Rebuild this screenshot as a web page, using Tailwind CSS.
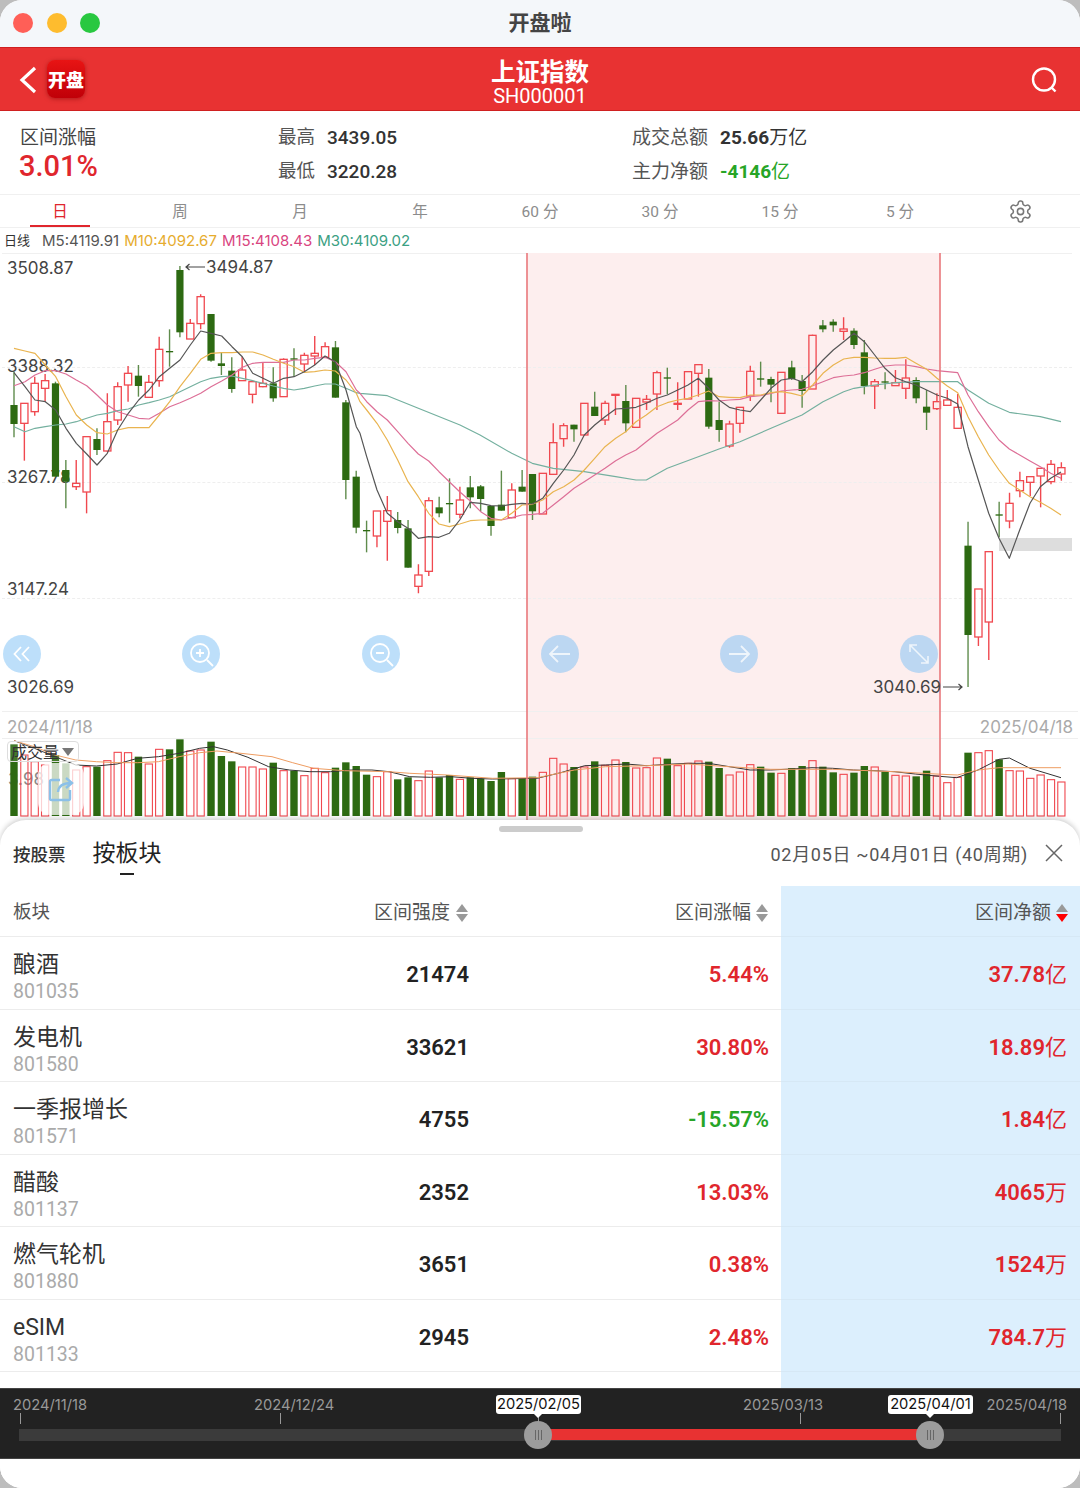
<!DOCTYPE html>
<html lang="zh-CN">
<head>
    <meta charset="UTF-8">
    <meta name="viewport" content="width=device-width, initial-scale=1.0">
    <title>开盘啦</title>
    <script src="https://cdn.jsdelivr.net/npm/@tailwindcss/browser@4"></script>
</head>
<body class="bg-[#bdbdbd]">
<div class="w-[1080px] h-[1488px] bg-white rounded-[22px] overflow-hidden flex flex-col relative text-[#333] [font-family:Roboto,'Noto_Sans_CJK_SC',sans-serif]">

    <!-- Title bar -->
    <div class="h-[47px] shrink-0 bg-[#f4f7fa] relative flex items-center justify-center">
        <div class="absolute left-[13px] top-[13px] flex gap-[13.5px]">
            <span class="w-5 h-5 rounded-full bg-[#ff5f57]"></span>
            <span class="w-5 h-5 rounded-full bg-[#febc2e]"></span>
            <span class="w-5 h-5 rounded-full bg-[#28c840]"></span>
        </div>
        <span class="text-[21px] font-bold text-[#444]">开盘啦</span>
    </div>

    <!-- Red header -->
    <div class="h-[64px] shrink-0 bg-[#e83232] border-y border-[#cf2020] relative flex flex-col items-center justify-center text-white">
        <svg class="absolute left-[18px] top-[18px]" width="20" height="28" viewBox="0 0 20 28" fill="none" stroke="white" stroke-width="3.2"><path d="M17 2 4 14l13 12"/></svg>
        <div class="absolute left-[47px] top-[12px] w-[38px] h-[38px] rounded-lg bg-gradient-to-b from-[#e81414] to-[#c00008] shadow-[0_1px_4px_rgba(120,0,0,0.5)] flex items-center justify-center text-[18px] font-black whitespace-nowrap pt-[2px]">开盘</div>
        <span class="text-[24.5px] leading-[29px] font-bold mt-[4px]">上证指数</span>
        <span class="text-[20px] leading-[18px]">SH000001</span>
        <svg class="absolute left-[1030px] top-[18px]" width="28" height="28" viewBox="0 0 28 28" fill="none" stroke="white" stroke-width="2.4"><circle cx="14" cy="13.5" r="11"/><path d="m21.5 21.5 4 4"/></svg>
    </div>

    <!-- Stats -->
    <div class="h-[84px] shrink-0 flex border-b border-[#f0f0f0] text-[19px] text-[#555]">
        <div class="w-[278px] pl-5 pt-[13px]">
            <div class="leading-[27px] text-[#444]">区间涨幅</div>
            <div class="text-[29px] leading-[31px] font-medium text-[#e0262d] -ml-px">3.01%</div>
        </div>
        <div class="w-[354px] pt-[13px] flex flex-col gap-[7px]">
            <div class="leading-[27px] flex gap-3"><span class="text-[18.5px]">最高</span><span class="text-[#333] font-medium">3439.05</span></div>
            <div class="leading-[27px] flex gap-3"><span class="text-[18.5px]">最低</span><span class="text-[#333] font-medium">3220.28</span></div>
        </div>
        <div class="pt-[13px] flex flex-col gap-[7px]">
            <div class="leading-[27px] flex gap-3"><span>成交总额</span><span class="text-[#333]"><b class="font-bold">25.66</b>万亿</span></div>
            <div class="leading-[27px] flex gap-3"><span>主力净额</span><span class="text-[#27a527]"><b class="font-bold">-4146</b>亿</span></div>
        </div>
    </div>

    <!-- Period tabs -->
    <div class="h-[33px] shrink-0 grid grid-cols-9 items-center text-center text-[15.5px] text-[#8c8c8c] border-b border-[#f0f0f0] pt-[3px]">
        <div class="relative h-full flex items-center justify-center text-[#e0262d]">日<span class="absolute bottom-0 left-[30px] w-[60px] h-[2px] bg-[#e0262d]"></span></div>
        <div>周</div>
        <div>月</div>
        <div>年</div>
        <div>60 分</div>
        <div>30 分</div>
        <div>15 分</div>
        <div>5 分</div>
        <div class="flex justify-center -mt-[3px]">
            <svg width="25" height="25" viewBox="0 0 24 24" fill="none" stroke="#777" stroke-width="1.5"><path d="M12.22 2h-.44a2 2 0 0 0-2 2v.18a2 2 0 0 1-1 1.73l-.43.25a2 2 0 0 1-2 0l-.15-.08a2 2 0 0 0-2.73.73l-.22.38a2 2 0 0 0 .73 2.73l.15.1a2 2 0 0 1 1 1.72v.51a2 2 0 0 1-1 1.74l-.15.09a2 2 0 0 0-.73 2.73l.22.38a2 2 0 0 0 2.73.73l.15-.08a2 2 0 0 1 2 0l.43.25a2 2 0 0 1 1 1.73V20a2 2 0 0 0 2 2h.44a2 2 0 0 0 2-2v-.18a2 2 0 0 1 1-1.73l.43-.25a2 2 0 0 1 2 0l.15.08a2 2 0 0 0 2.73-.73l.22-.39a2 2 0 0 0-.73-2.73l-.15-.08a2 2 0 0 1-1-1.74v-.5a2 2 0 0 1 1-1.74l.15-.09a2 2 0 0 0 .73-2.73l-.22-.38a2 2 0 0 0-2.73-.73l-.15.08a2 2 0 0 1-2 0l-.43-.25a2 2 0 0 1-1-1.73V4a2 2 0 0 0-2-2z"/><circle cx="12" cy="12" r="3"/></svg>
        </div>
    </div>

    <!-- MA legend -->
    <div class="h-[25px] shrink-0 flex items-center pl-1 pt-[1px] text-[15px] whitespace-nowrap [font-family:Inter,'Noto_Sans_CJK_SC',sans-serif]">
        <span class="w-[38px] text-[13px] text-[#333]">日线</span>
        <span class="text-[#555] mr-[5px]">M5:4119.91</span>
        <span class="text-[#e6ac2e] mr-[5px]">M10:4092.67</span>
        <span class="text-[#d9457f] mr-[5px]">M15:4108.43</span>
        <span class="text-[#3ba083]">M30:4109.02</span>
    </div>

    <!-- Chart canvas -->
    <div class="h-[567px] shrink-0 relative overflow-hidden text-[17px] text-[#444] [font-family:Inter,'Noto_Sans_CJK_SC',sans-serif]">
        <div class="absolute left-[2px] right-[8px] top-0 border-t border-[#f0f0f0]"></div>
        <div class="absolute left-[527px] w-[413px] top-0 bottom-0 bg-[#fdeeee]"></div>
        <div class="absolute left-[2px] right-[8px] top-[114px] border-t border-dashed border-[#eeeeee]"></div>
        <div class="absolute left-[2px] right-[8px] top-[229px] border-t border-dashed border-[#eeeeee]"></div>
        <div class="absolute left-[2px] right-[8px] top-[345px] border-t border-dashed border-[#eeeeee]"></div>
        <div class="absolute left-[2px] right-[2px] top-[458px] border-t border-[#efefef]"></div>
        <div class="absolute left-[2px] right-[2px] top-[485px] border-t border-[#efefef]"></div>

        <span class="absolute left-[7px] top-[3px]">3508.87</span>
        <span class="absolute left-[7px] top-[101px]">3388.32</span>
        <span class="absolute left-[7px] top-[212px]">3267.78</span>
        <span class="absolute left-[7px] top-[324px]">3147.24</span>
        <span class="absolute left-[7px] top-[422px]">3026.69</span>
        <span class="absolute left-[7px] top-[462px] text-[#aaa]">2024/11/18</span>
        <span class="absolute right-[7px] top-[462px] text-[#aaa]">2025/04/18</span>

        <span class="absolute left-[8px] top-[514px] text-[#888]">3.98</span>
        <div id="candles" class="absolute inset-0"></div>

        <!-- volume selector, drawn over the bars -->
        <div class="absolute left-[7px] top-[488px] w-[72px] h-[21px] border border-[#ddd] rounded-sm flex items-center pl-[3px] text-[#333] text-[16px] leading-none bg-white/10 whitespace-nowrap">成交量<span class="ml-[3px] w-0 h-0 border-x-[6px] border-x-transparent border-t-[8px] border-t-[#777]"></span></div>
        <div class="absolute left-[38px] top-[510px] w-[46px] h-[52px] rounded-xl bg-white/75 flex items-center justify-center">
            <svg width="26" height="26" viewBox="0 0 26 26" fill="none" stroke="#8bc0e8" stroke-width="2.4"><path d="M12 4H3.5a1.5 1.5 0 0 0-1.500 1.500v17A1.500 1.500 0 0 0 3.500 24h17a1.500 1.500 0 0 0 1.500-1.500V14"/><path d="M10 16c.5-6 5-9 13-9M18 2l6 5-6 5"/></svg>
        </div>

        <span class="absolute left-[185px] top-[2px] whitespace-nowrap"><svg class="inline-block mr-[1px] mb-[3px]" width="20" height="8" viewBox="0 0 20 8" fill="none" stroke="#444" stroke-width="1.2"><path d="M20 4H1M4.500 1 1 4l3.500 3"/></svg>3494.87</span>
        <span class="absolute left-[873px] top-[422px] whitespace-nowrap">3040.69<svg class="inline-block ml-[2px] mb-[3px]" width="20" height="8" viewBox="0 0 20 8" fill="none" stroke="#444" stroke-width="1.2"><path d="M0 4h19M15.500 1 19 4l-3.500 3"/></svg></span>

        <!-- round chart buttons -->
        <div class="absolute left-[3px] top-[382px] w-[38px] h-[38px] rounded-full bg-[#7cc0f5]/50 flex items-center justify-center">
            <svg width="20" height="20" viewBox="0 0 20 20" fill="none" stroke="white" stroke-width="1.8"><path d="M9 3 2.500 10 9 17M17 3l-6.500 7 6.500 7"/></svg>
        </div>
        <div class="absolute left-[182px] top-[382px] w-[38px] h-[38px] rounded-full bg-[#7cc0f5]/50 flex items-center justify-center">
            <svg width="28" height="28" viewBox="0 0 28 28" fill="none" stroke="white" stroke-width="1.8"><circle cx="13" cy="13" r="9"/><path d="M9 13h8M13 9v8M20 20l6 6"/></svg>
        </div>
        <div class="absolute left-[362px] top-[382px] w-[38px] h-[38px] rounded-full bg-[#7cc0f5]/50 flex items-center justify-center">
            <svg width="28" height="28" viewBox="0 0 28 28" fill="none" stroke="white" stroke-width="1.8"><circle cx="13" cy="13" r="9"/><path d="M9 13h8M20 20l6 6"/></svg>
        </div>
        <div class="absolute left-[541px] top-[382px] w-[38px] h-[38px] rounded-full bg-[#7cc0f5]/50 flex items-center justify-center">
            <svg width="24" height="24" viewBox="0 0 24 24" fill="none" stroke="white" stroke-width="1.8" opacity="0.75"><path d="M22 12H2M10 4l-8 8 8 8"/></svg>
        </div>
        <div class="absolute left-[720px] top-[382px] w-[38px] h-[38px] rounded-full bg-[#7cc0f5]/50 flex items-center justify-center">
            <svg width="24" height="24" viewBox="0 0 24 24" fill="none" stroke="white" stroke-width="1.8" opacity="0.75"><path d="M2 12h20M14 4l8 8-8 8"/></svg>
        </div>
        <div class="absolute left-[900px] top-[382px] w-[38px] h-[38px] rounded-full bg-[#7cc0f5]/50 flex items-center justify-center">
            <svg width="22" height="22" viewBox="0 0 22 22" fill="none" stroke="white" stroke-width="1.6" opacity="0.75"><path d="M2 2l18 18M2 9V2h7M20 13v7h-7"/></svg>
        </div>
    </div>

    <!-- Bottom sheet -->
    <div class="absolute left-0 right-0 top-[820px] bottom-0 bg-white rounded-t-[26px] shadow-[0_-2px_5px_rgba(0,0,0,0.18)] flex flex-col">
        <div class="absolute left-[499px] top-[6px] w-[84px] h-[6px] rounded-full bg-[#cccccc]"></div>
        <div class="h-[66px] shrink-0 flex items-center pl-[13px] pr-[17px] pt-[2px]">
            <span class="text-[17.5px] font-medium text-[#333] mt-[3px]">按股票</span>
            <span class="relative ml-[27px] text-[23px] text-[#222]">按板块<span class="absolute left-[27px] bottom-[-4px] w-[14px] h-[2.500px] bg-[#222]"></span></span>
            <span class="ml-auto text-[18px] text-[#555] tracking-[0.7px] whitespace-nowrap">02月05日 ~04月01日 (40周期)</span>
            <svg class="ml-[17px] mt-[-2px]" width="18" height="18" viewBox="0 0 18 18" fill="none" stroke="#666" stroke-width="1.5"><path d="m1 1 16 16M17 1 1 17"/></svg>
        </div>

        <div class="grid grid-cols-[469px_312px_299px] grid-rows-[51px_repeat(6,72.5px)_1fr] flex-1 text-[22px] font-semibold">
            <!-- header -->
            <div class="border-b border-[#ececec] flex items-center justify-between pl-[13px] pr-px pt-[4px] text-[19px] font-normal text-[#555]">
                <span class="text-[18.500px]">板块</span>
                <span class="flex items-center gap-[6px]">区间强度<span class="flex flex-col gap-[2px]"><span class="w-0 h-0 border-x-[6px] border-x-transparent border-b-[8px] border-b-[#999]"></span><span class="w-0 h-0 border-x-[6px] border-x-transparent border-t-[8px] border-t-[#999]"></span></span></span>
            </div>
            <div class="border-b border-[#ececec] flex items-center justify-end pr-[13px] pt-[4px] text-[19px] font-normal text-[#555] gap-[5px]">区间涨幅<span class="flex flex-col gap-[2px]"><span class="w-0 h-0 border-x-[6px] border-x-transparent border-b-[8px] border-b-[#999]"></span><span class="w-0 h-0 border-x-[6px] border-x-transparent border-t-[8px] border-t-[#999]"></span></span></div>
            <div class="border-b border-[#d6e8f5] bg-[#dceffd] flex items-center justify-end pr-[12px] pt-[4px] text-[19px] font-normal text-[#555] gap-[5px]">区间净额<span class="flex flex-col gap-[2px]"><span class="w-0 h-0 border-x-[6px] border-x-transparent border-b-[8px] border-b-[#999]"></span><span class="w-0 h-0 border-x-[6px] border-x-transparent border-t-[8px] border-t-[#f00]"></span></span></div>

            <!-- rows -->
            <div class="border-b border-[#ececec] flex items-center justify-between pl-[13px] pt-[4px]"><div class="font-normal pt-[5px]"><div class="text-[23px] leading-[30px] text-[#333]">酿酒</div><div class="text-[19.500px] leading-[24px] text-[#aaa]">801035</div></div><span class="text-[#222]">21474</span></div>
            <div class="border-b border-[#ececec] flex items-center justify-end pr-[12px] pt-[4px] text-[#e0262d]">5.44%</div>
            <div class="border-b border-[#d6e8f5] bg-[#dceffd] flex items-center justify-end pr-[13px] pt-[4px] text-[#e0262d]">37.78<span class="font-normal">亿</span></div>

            <div class="border-b border-[#ececec] flex items-center justify-between pl-[13px] pt-[4px]"><div class="font-normal pt-[5px]"><div class="text-[23px] leading-[30px] text-[#333]">发电机</div><div class="text-[19.500px] leading-[24px] text-[#aaa]">801580</div></div><span class="text-[#222]">33621</span></div>
            <div class="border-b border-[#ececec] flex items-center justify-end pr-[12px] pt-[4px] text-[#e0262d]">30.80%</div>
            <div class="border-b border-[#d6e8f5] bg-[#dceffd] flex items-center justify-end pr-[13px] pt-[4px] text-[#e0262d]">18.89<span class="font-normal">亿</span></div>

            <div class="border-b border-[#ececec] flex items-center justify-between pl-[13px] pt-[4px]"><div class="font-normal pt-[5px]"><div class="text-[23px] leading-[30px] text-[#333]">一季报增长</div><div class="text-[19.500px] leading-[24px] text-[#aaa]">801571</div></div><span class="text-[#222]">4755</span></div>
            <div class="border-b border-[#ececec] flex items-center justify-end pr-[12px] pt-[4px] text-[#27a527]">-15.57%</div>
            <div class="border-b border-[#d6e8f5] bg-[#dceffd] flex items-center justify-end pr-[13px] pt-[4px] text-[#e0262d]">1.84<span class="font-normal">亿</span></div>

            <div class="border-b border-[#ececec] flex items-center justify-between pl-[13px] pt-[4px]"><div class="font-normal pt-[5px]"><div class="text-[23px] leading-[30px] text-[#333]">醋酸</div><div class="text-[19.500px] leading-[24px] text-[#aaa]">801137</div></div><span class="text-[#222]">2352</span></div>
            <div class="border-b border-[#ececec] flex items-center justify-end pr-[12px] pt-[4px] text-[#e0262d]">13.03%</div>
            <div class="border-b border-[#d6e8f5] bg-[#dceffd] flex items-center justify-end pr-[13px] pt-[4px] text-[#e0262d]">4065<span class="font-normal">万</span></div>

            <div class="border-b border-[#ececec] flex items-center justify-between pl-[13px] pt-[4px]"><div class="font-normal pt-[5px]"><div class="text-[23px] leading-[30px] text-[#333]">燃气轮机</div><div class="text-[19.500px] leading-[24px] text-[#aaa]">801880</div></div><span class="text-[#222]">3651</span></div>
            <div class="border-b border-[#ececec] flex items-center justify-end pr-[12px] pt-[4px] text-[#e0262d]">0.38%</div>
            <div class="border-b border-[#d6e8f5] bg-[#dceffd] flex items-center justify-end pr-[13px] pt-[4px] text-[#e0262d]">1524<span class="font-normal">万</span></div>

            <div class="border-b border-[#ececec] flex items-center justify-between pl-[13px] pt-[4px]"><div class="font-normal pt-[5px]"><div class="text-[23px] leading-[30px] text-[#333]">eSIM</div><div class="text-[19.500px] leading-[24px] text-[#aaa]">801133</div></div><span class="text-[#222]">2945</span></div>
            <div class="border-b border-[#ececec] flex items-center justify-end pr-[12px] pt-[4px] text-[#e0262d]">2.48%</div>
            <div class="border-b border-[#d6e8f5] bg-[#dceffd] flex items-center justify-end pr-[13px] pt-[4px] text-[#e0262d]">784.7<span class="font-normal">万</span></div>

            <div class="col-span-2"></div>
            <div class="bg-[#dceffd]"></div>
        </div>

        <!-- Range slider -->
        <div class="h-[71px] shrink-0 bg-[#222222] relative border-y border-[#444] text-[14.7px] text-[#999] [font-family:Inter,sans-serif]">
            <span class="absolute left-[13px] top-[5px]">2024/11/18</span>
            <span class="absolute left-[254px] top-[5px]">2024/12/24</span>
            <span class="absolute left-[743px] top-[5px]">2025/03/13</span>
            <span class="absolute right-[13px] top-[5px]">2025/04/18</span>

            <span class="absolute left-[20px] top-[24px] w-px h-[11px] bg-[#999]"></span>
            <span class="absolute left-[280px] top-[24px] w-px h-[11px] bg-[#999]"></span>
            <span class="absolute left-[538px] top-[24px] w-px h-[11px] bg-[#999]"></span>
            <span class="absolute left-[800px] top-[24px] w-px h-[11px] bg-[#999]"></span>
            <span class="absolute left-[1060px] top-[24px] w-px h-[11px] bg-[#999]"></span>

            <div class="absolute left-[19px] right-[19px] top-[40px] h-[12px] bg-[#3b3b3b]"></div>
            <div class="absolute left-[538px] w-[392px] top-[40px] h-[11px] bg-[#e83232]"></div>

            <div class="absolute left-[496px] top-[6px] w-[85px] h-[19px] bg-white rounded-[3px] text-[#111] flex items-center justify-center">2025/02/05</div>
            <span class="absolute left-[534px] top-[25px] w-0 h-0 border-x-[4px] border-x-transparent border-t-[4px] border-t-white"></span>
            <div class="absolute left-[888px] top-[6px] w-[85px] h-[19px] bg-white rounded-[3px] text-[#111] flex items-center justify-center">2025/04/01</div>
            <span class="absolute left-[926px] top-[25px] w-0 h-0 border-x-[4px] border-x-transparent border-t-[4px] border-t-white"></span>

            <div class="absolute left-[524px] top-[32px] w-[28px] h-[28px] rounded-full bg-[#9c9c9c] flex items-center justify-center gap-[2px]"><i class="w-px h-[10px] bg-[#666]"></i><i class="w-px h-[10px] bg-[#666]"></i><i class="w-px h-[10px] bg-[#666]"></i></div>
            <div class="absolute left-[916px] top-[32px] w-[28px] h-[28px] rounded-full bg-[#9c9c9c] flex items-center justify-center gap-[2px]"><i class="w-px h-[10px] bg-[#666]"></i><i class="w-px h-[10px] bg-[#666]"></i><i class="w-px h-[10px] bg-[#666]"></i></div>
        </div>
        <div class="h-[29px] shrink-0 bg-white"></div>
    </div>
</div>

<script>
    // candle rows: type, bodyTop, bodyBottom, high, low. y = page pixels x3, measured per section
    const sec1 = [['g',465,522,365,562],['r',460,520,460,632],['r',400,485,380,497],['r',392,415,372,455],['g',400,680,395,680],['g',660,695,630,775],['r',700,710,630,720],['r',560,726,560,790],['g',567,600,535,615],['r',515,603,430,605],['r',410,510,397,525],['r',370,405,348,455],['g',377,408,345,440],['r',397,442,375,442],['r',298,392,260,410],['g',303,307,238,350],['g',60,247,48,262],['r',220,267,207,267],['r',140,221,133,238],['g',192,332,192,335],['g',340,348,308,375],['g',362,417,322,428],['r',360,392,320,392],['r',395,433,395,460],['r',400,410,337,412],['g',400,445,352,455],['r',328,440,325,440],['g',325,329,295,380],['r',316,342,308,365],['r',310,318,258,345],['r',290,322,277,325],['g',292,443,273,443],['g',457,690,450,748],['g',680,833,662,850]];
    const sec2 = [['g',690,694,662,757],['r',633,708,633,742],['r',632,664,588,782],['g',660,684,636,700],['g',685,803,660,803],['r',825,859,793,880],['r',602,814,592,828],['g',622,640,590,652],['g',609,613,535,668],['r',600,643,560,655],['g',562,592,528,625],['g',559,597,555,635],['g',618,678,618,707],['g',614,632,512,632],['r',570,653,550,655],['g',560,575,510,575],['g',522,634,522,660],['r',520,642,520,642],['r',428,523,370,525],['r',377,416,370,440],['g',374,388,374,425],['r',310,405,310,405],['g',320,348,275,348],['r',310,360,302,375],['r',283,286,283,345],['g',303,370,255,397],['r',295,382,295,382],['r',298,306,285,330],['r',218,282,212,330],['g',232,236,203,283],['r',310,313,247,330],['r',215,297,215,297],['r',194,220,194,290],['g',233,380,207,386],['g',360,390,305,425]];
    const sec3 = [['r',372,438,362,443],['r',322,370,322,398],['r',214,288,197,303],['g',235,239,185,260],['g',237,254,230,307],['r',217,340,217,340],['g',202,237,182,240],['g',243,273,225,323],['r',106,267,104,267],['g',76,88,60,97],['g',65,76,58,95],['r',87,94,52,120],['g',92,135,85,147],['g',157,258,120,283],['r',245,258,237,327],['g',244,248,217,268],['r',248,257,210,257],['r',234,265,178,297],['g',240,295,232,310],['g',320,338,270,390],['r',305,326,280,330],['r',300,316,270,318],['r',322,385,282,385],['g',737,1005,665,1161],['r',867,1011,867,1038],['r',755,966,755,1080],['g',643,647,605,712],['r',610,663,578,685],['r',542,572,515,592],['r',530,547,530,588],['r',505,528,505,622],['r',493,545,480,553],['r',503,522,487,542]];

    const ySec1 = z => 250 + z / 3;
    const ySec2 = z => 300 + z / 3;
    const candles = [...sec1.map(c => [c[0], ...c.slice(1).map(ySec1)]), ...sec2.map(c => [c[0], ...c.slice(1).map(ySec2)]), ...sec3.map(c => [c[0], ...c.slice(1).map(ySec2)])];
    const barX = i => 14 + i * 10.37;

    // volume tops, page y x3 from 620
    const volTops = [373,405,425,435,405,430,450,440,440,422,397,398,410,432,388,388,358,393,390,365,408,424,441,441,447,428,452,452,467,445,458,443,427,438,464,470,455,478,472,482,453,472,465,478,472,476,483,456,476,476,470,457,415,432,441,441,424,436,420,426,444,443,414,416,437,430,423,425,444,465,456,434,440,458,460,444,438,422,440,457,463,458,438,441,455,466,468,469,452,468,488,472,398,398,392,418,452,453,475,465,479,486];

    // moving averages, zoom coordinates per section
    const pts = (list, fx, fy) => list.map(p => fx(p[0]).toFixed(1) + ',' + fy(p[1]).toFixed(1));
    const s1 = (l) => pts(l, x => x / 3, ySec1);
    const s2 = (l) => pts(l, x => 360 + x / 3, ySec2);
    const s3 = (l) => pts(l, x => 720 + x / 3, ySec2);

    const m5 = [...s1([[42,368],[75,410],[105,450],[136,455],[167,480],[198,535],[229,580],[260,612],[291,645],[322,610],[353,540],[385,490],[416,450],[447,420],[478,380],[509,355],[540,330],[571,285],[602,243],[633,250],[665,258],[696,290],[727,320],[758,370],[789,385],[820,400],[851,385],[882,380],[913,365],[944,345],[975,318],[1006,335],[1038,420],[1069,530]]),
        ...s2([[0,400],[20,470],[51,570],[82,640],[113,665],[144,685],[175,715],[206,710],[237,712],[268,700],[299,660],[331,607],[362,610],[393,617],[424,618],[455,613],[486,610],[517,612],[548,595],[580,550],[611,510],[642,465],[673,405],[704,375],[735,350],[767,327],[797,325],[828,322],[859,310],[891,295],[922,285],[953,270],[984,255],[1015,235],[1046,265],[1077,300]]),
        ...s3([[28,322],[60,330],[91,335],[122,300],[153,265],[184,240],[215,235],[246,245],[278,215],[309,180],[340,150],[371,125],[402,100],[433,125],[464,165],[495,205],[526,233],[557,245],[588,255],[620,270],[651,285],[682,295],[713,312],[744,440],[775,540],[806,640],[837,715],[868,775],[899,690],[930,610],[961,560],[992,535],[1023,516]])];
    const m10 = [...s1([[42,295],[75,303],[105,310],[136,345],[167,380],[198,440],[229,495],[260,525],[291,548],[322,552],[353,540],[385,533],[416,533],[447,533],[478,495],[509,455],[540,410],[571,370],[602,328],[633,310],[665,308],[696,308],[727,306],[758,306],[789,315],[820,328],[851,340],[882,350],[913,367],[944,365],[975,360],[1006,363],[1038,390],[1069,430]]),
        ...s2([[0,305],[20,330],[51,370],[82,420],[113,480],[144,545],[175,590],[206,640],[237,672],[268,680],[299,672],[331,662],[362,660],[393,660],[424,660],[455,640],[486,615],[517,613],[548,600],[580,575],[611,560],[642,540],[673,510],[704,475],[735,440],[767,415],[797,395],[828,365],[859,345],[891,320],[922,308],[953,300],[984,295],[1015,285],[1046,273],[1077,290]]),
        ...s3([[28,292],[60,293],[91,285],[122,285],[153,278],[184,275],[215,280],[246,288],[278,255],[309,220],[340,195],[371,177],[402,172],[433,172],[464,174],[495,175],[526,175],[557,172],[588,190],[620,208],[651,235],[682,258],[713,278],[744,350],[775,410],[806,465],[837,510],[868,550],[899,570],[930,590],[961,607],[992,625],[1023,645]])];
    const m15 = [...s1([[42,407],[75,395],[105,375],[136,362],[167,362],[198,372],[229,390],[260,407],[291,435],[322,465],[353,485],[385,495],[416,505],[447,507],[478,490],[509,470],[540,458],[571,445],[602,430],[633,410],[665,393],[696,375],[727,352],[758,340],[789,337],[820,337],[851,337],[882,330],[913,330],[944,325],[975,322],[1006,335],[1038,365],[1069,420]]),
        ...s2([[0,280],[20,305],[51,335],[82,360],[113,395],[144,430],[175,462],[206,483],[237,515],[268,545],[299,575],[331,603],[362,635],[393,655],[424,660],[455,653],[486,645],[517,643],[548,640],[580,615],[611,590],[642,565],[673,545],[704,525],[735,505],[767,482],[797,465],[828,450],[859,425],[891,400],[922,380],[953,360],[984,330],[1015,305],[1046,302],[1077,303]]),
        ...s3([[28,300],[60,298],[91,290],[122,287],[153,280],[184,273],[215,270],[246,268],[278,257],[309,245],[340,233],[371,228],[402,225],[433,218],[464,208],[495,198],[526,195],[557,195],[588,200],[620,207],[651,212],[682,215],[713,218],[744,285],[775,335],[806,380],[837,420],[868,447],[899,465],[930,483],[961,500],[992,520],[1023,535]])];
    const m30 = [...s1([[42,530],[75,545],[105,535],[136,530],[167,525],[198,522],[229,515],[260,505],[291,495],[322,490],[353,482],[385,477],[416,465],[447,458],[478,450],[509,440],[540,425],[571,410],[602,395],[633,385],[665,380],[696,378],[727,385],[758,392],[789,400],[820,408],[851,415],[882,420],[913,415],[944,408],[975,402],[1006,402],[1038,415],[1069,428]]),
        ...s2([[0,280],[82,287],[175,325],[300,375],[360,405],[455,460],[517,490],[580,505],[673,515],[767,530],[828,540],[859,540],[922,505],[1015,470],[1077,447]]),
        ...s3([[60,425],[153,385],[246,345],[309,305],[371,275],[402,265],[433,260],[464,255],[526,248],[588,245],[651,245],[713,245],[744,270],[806,310],[868,337],[961,350],[1023,365]])];

    const yVol = z => 620 + z / 3;
    const vol1 = [...pts([[41,362],[100,385],[160,410],[220,435],[280,438],[340,432],[400,415],[460,410],[520,400],[580,385],[620,380],[660,390],[720,412],[780,440],[840,450],[900,455],[960,455],[1020,450],[1080,450],[1130,455],[1190,470],[1250,472],[1310,470],[1370,475],[1430,477],[1560,475]], x => x / 2.904, yVol),
        ...pts([[60,458],[130,437],[190,435],[250,432],[310,437],[370,433],[430,430],[490,430],[550,440],[610,450],[670,450],[730,447],[790,443],[850,445],[910,450],[970,452],[1030,455],[1090,462],[1150,468],[1210,473],[1272,450],[1333,418],[1363,414],[1423,445],[1513,473]], x => 540 + x / 2.904, yVol)];
    const vol2 = [...pts([[41,362],[100,380],[160,405],[220,420],[280,425],[340,428],[400,428],[460,425],[520,410],[580,398],[630,393],[700,400],[790,410],[850,428],[910,445],[1000,452],[1130,455],[1190,460],[1300,465],[1430,475],[1560,473]], x => x / 2.904, yVol),
        ...pts([[100,450],[190,440],[310,437],[430,432],[550,440],[670,448],[850,448],[1030,455],[1150,462],[1212,465],[1272,450],[1333,443],[1513,443]], x => 540 + x / 2.904, yVol)];

    let svg = '<svg width="1080" height="567" viewBox="0 253 1080 567" fill="none">';
    svg += '<rect x="999" y="538" width="73" height="13" fill="#dddddd"/>';

    candles.forEach((c, i) => {
        const x = barX(i);
        const [type, top, bottom, high, low] = c;
        if (type === 'g') {
            svg += `<path d="M${x} ${high}V${low}" stroke="#5f8c4c" stroke-width="1.4"/>`;
            svg += `<rect x="${x - 3.6}" y="${top}" width="7.2" height="${bottom - top}" fill="#2d6a12"/>`;
        } else {
            svg += `<path d="M${x} ${high}V${top}M${x} ${bottom}V${low}" stroke="#f0484f" stroke-width="1.4"/>`;
            svg += `<rect x="${x - 3.6}" y="${top}" width="7.2" height="${bottom - top}" stroke="#f0484f" stroke-width="1.3"/>`;
        }
    });

    const line = (p, color, w) => `<polyline points="${p.join(' ')}" stroke="${color}" stroke-width="${w}" stroke-linejoin="round"/>`;
    svg += line(m30, '#74b09f', 1.2) + line(m15, '#dd6f97', 1.2) + line(m10, '#e9b450', 1.2) + line(m5, '#555555', 1.2);

    volTops.forEach((z, i) => {
        const x = barX(i);
        const top = yVol(z);
        if (candles[i][0] === 'g') {
            svg += `<rect x="${x - 3.7}" y="${top}" width="7.4" height="${816 - top}" fill="#2d6a12"/>`;
        } else {
            svg += `<rect x="${x - 3.6}" y="${top}" width="7.2" height="${816 - top}" stroke="#f0484f" stroke-width="1.1"/>`;
        }
    });
    svg += line(vol1, '#333333', 1) + line(vol2, '#ee9d62', 1);

    svg += '<path d="M527 253V820M940 253V820" stroke="#e9787c" stroke-width="1.6"/>';
    svg += '</svg>';
    document.getElementById('candles').innerHTML = svg;
</script>
</body>
</html>
